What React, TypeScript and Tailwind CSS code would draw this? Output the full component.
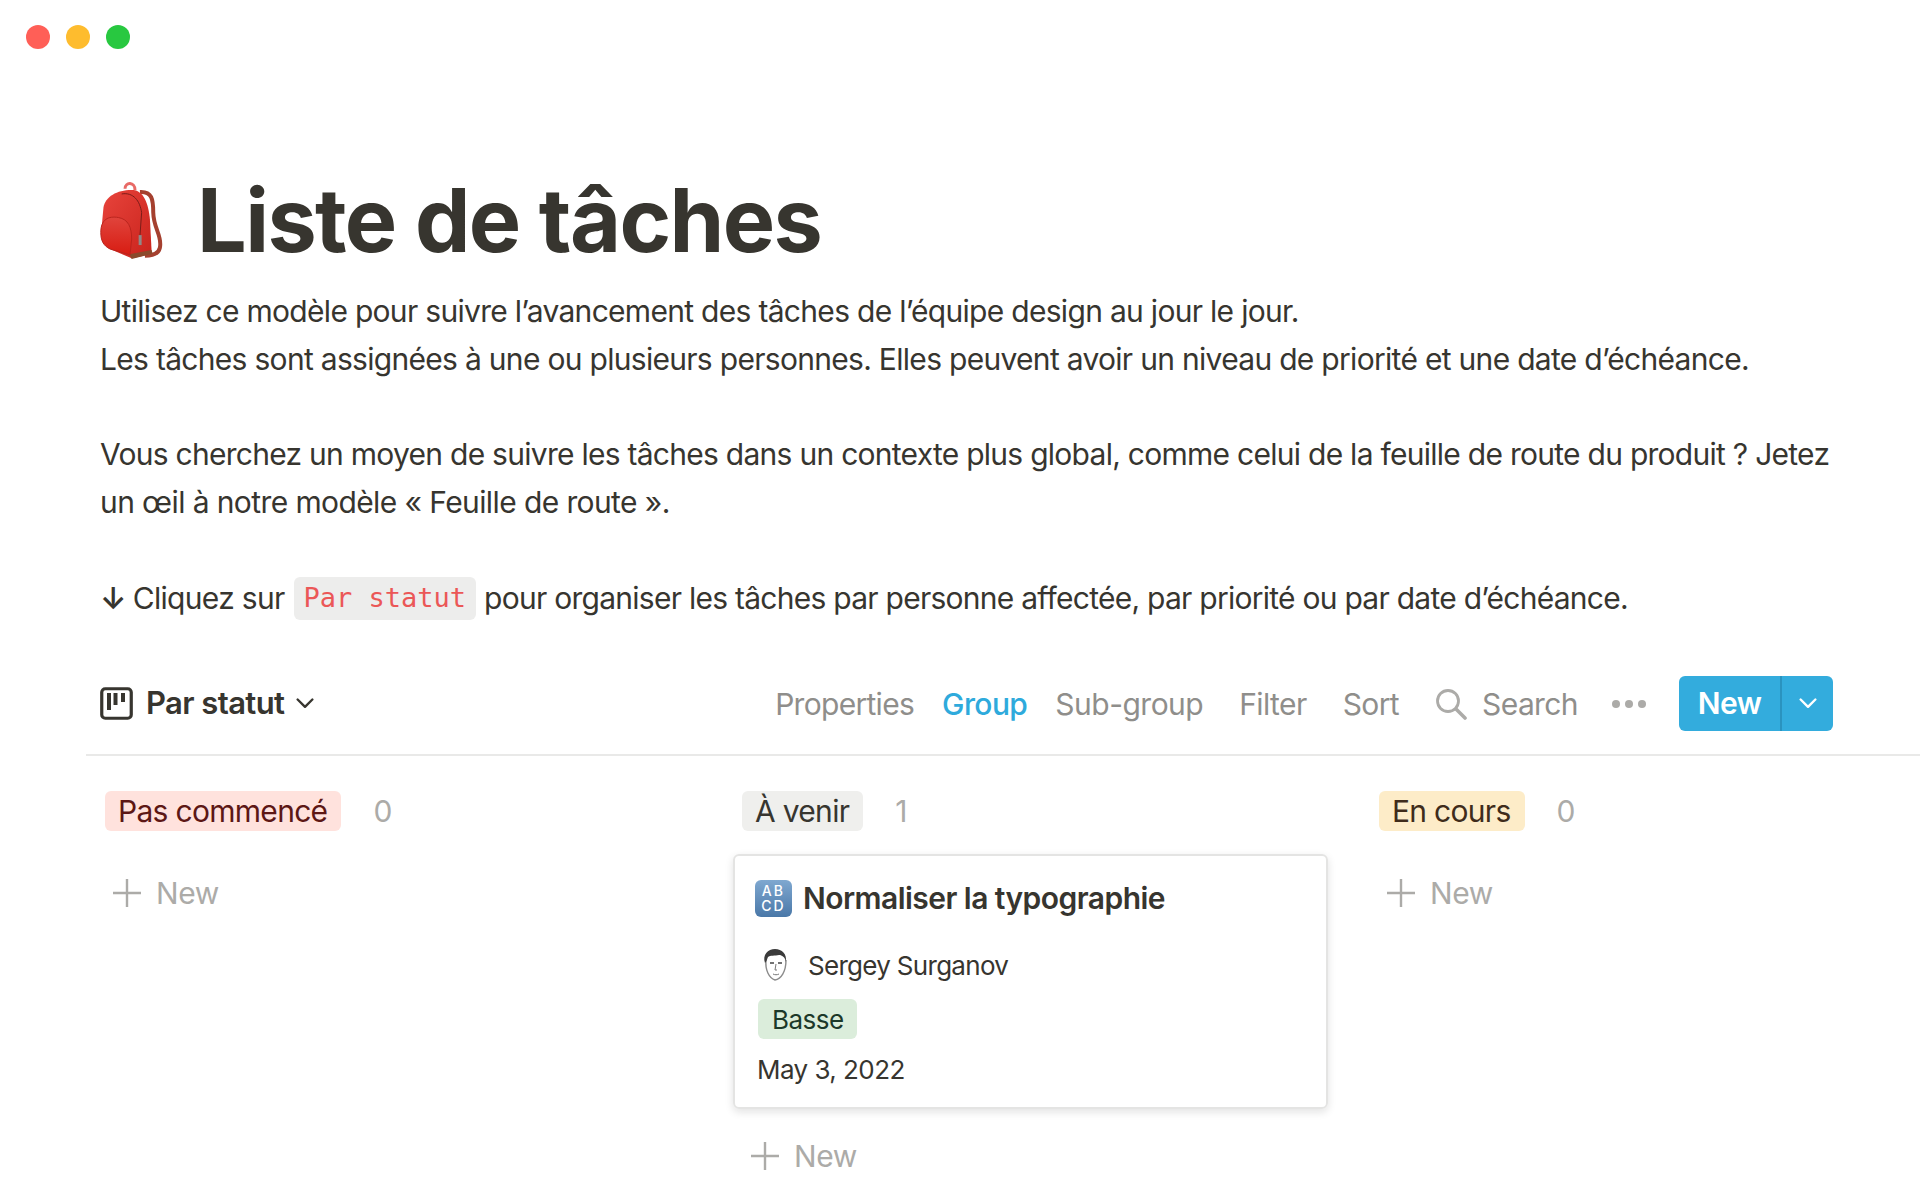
const sans = '[font-family:Inter,"Liberation_Sans",sans-serif]'

function Backpack() {
  return (
    <svg width="65" height="78" viewBox="30 35 195 235" className="shrink-0">
      <defs>
        <linearGradient id="bp" x1="0" y1="0" x2="1" y2="1">
          <stop offset="0" stopColor="#e8443c" />
          <stop offset="1" stopColor="#c9231c" />
        </linearGradient>
        <linearGradient id="bq" x1="0" y1="0" x2="0" y2="1">
          <stop offset="0" stopColor="#e0443c" />
          <stop offset="1" stopColor="#d81c12" />
        </linearGradient>
      </defs>
      <path d="M105 58C105 37 135 37 135 62" fill="none" stroke="#e86a66" strokeWidth="9" />
      <path d="M150 68C186 66 190 90 190 130C191 180 218 200 210 236C206 256 185 260 165 260" fill="none" stroke="#a5402f" strokeWidth="12" />
      <path d="M40 115C45 80 85 60 130 62C160 65 175 100 180 150L185 245C185 255 160 262 125 268L60 240C40 230 35 200 35 170Z" fill="url(#bp)" />
      <path d="M118 256L185 243L188 254L125 270Z" fill="#8a4a2c" />
      <path d="M95 74C130 68 150 95 155 130L150 200" fill="none" stroke="#7a1c18" strokeWidth="3" />
      <path d="M146 198h9v30h-9z" fill="#8f8a88" />
      <path d="M32 190C32 150 55 140 85 145C115 150 125 175 125 210L120 258L60 240C40 230 32 215 32 190Z" fill="url(#bq)" stroke="#b8241d" strokeWidth="3" />
    </svg>
  )
}

function BoardIcon() {
  return (
    <svg width="33" height="33" viewBox="0 0 33 33" className="shrink-0">
      <rect x="1.75" y="1.75" width="29.5" height="29.5" rx="3.5" fill="none" stroke="#37352f" strokeWidth="3.2" />
      <path d="M7 6h4v17H7zM13.5 6h4v12h-4zM21 6h4v9h-4z" fill="#37352f" />
    </svg>
  )
}

function Chevron({ color, w = 18 }: { color: string; w?: number }) {
  return (
    <svg width={w} height={w * 0.6} viewBox="0 0 18 11" fill="none" className="shrink-0">
      <path d="M1.5 1.5L9 9L16.5 1.5" stroke={color} strokeWidth="2.4" strokeLinecap="round" strokeLinejoin="round" />
    </svg>
  )
}

function AddRow({ className }: { className: string }) {
  return (
    <div className={`flex items-center gap-[15px] h-[40px] text-[30px] tracking-[-0.4px] text-[#acaba8] ${className}`}>
      <svg width="28" height="28" viewBox="0 0 28 28" className="shrink-0">
        <path d="M14 0v28M0 14h28" stroke="#acaba8" strokeWidth="2.4" />
      </svg>
      New
    </div>
  )
}

function Avatar() {
  return (
    <svg width="26" height="34" viewBox="0 0 26 34" fill="none" className="shrink-0">
      <path d="M4 12C3 22 7 30 13 32C19 31 24 24 24 12" fill="#fff" stroke="#8b8b8b" strokeWidth="1.4" />
      <path d="M3 15C0 7 6 1 13 1C20 1 25 6 24 14C23 9 20 7 17 7C13 8 8 7 6 9C5 11 5 13 3 15Z" fill="#3b3b3b" />
      <path d="M8 15h4M16 15h4" stroke="#444" strokeWidth="1.5" />
      <path d="M14 16L13 22H15M11 26C13 27 15 27 17 26" stroke="#777" strokeWidth="1" />
    </svg>
  )
}

function Column({ label, count, tone, children }: { label: string; count: number; tone: string; children: React.ReactNode }) {
  return (
    <div className="w-[593px] shrink-0 flex flex-col">
      <div className="flex items-center h-[40px] ml-[8px]">
        <span className={`h-[40px] pl-[13px] pr-[14px] rounded-[6px] flex items-center text-[30px] tracking-[-0.7px] whitespace-nowrap ${tone}`}>{label}</span>
        <span className="ml-[32px] text-[30px] text-[#acaba8]">{count}</span>
      </div>
      {children}
    </div>
  )
}

export default function App() {
  return (
    <div className={`w-[1920px] h-[1200px] overflow-hidden bg-white text-[#37352f] ${sans}`}>
      <div className="flex gap-4 pt-[25px] pl-[26px]">
        <span className="w-6 h-6 rounded-full bg-[#ff5f57]" />
        <span className="w-6 h-6 rounded-full bg-[#febc2e]" />
        <span className="w-6 h-6 rounded-full bg-[#28c840]" />
      </div>

      <div className="flex items-center gap-[32px] h-[100px] mt-[121px] ml-[100px]">
        <Backpack />
        <h1 className="text-[88px] leading-none font-bold tracking-[-1.6px] whitespace-nowrap">Liste de tâches</h1>
      </div>

      <div className="mt-[17px] ml-[100px] text-[30px] leading-[48px] whitespace-nowrap tracking-[-0.7px]">
        <p>Utilisez ce modèle pour suivre l’avancement des tâches de l’équipe design au jour le jour.</p>
        <p>Les tâches sont assignées à une ou plusieurs personnes. Elles peuvent avoir un niveau de priorité et une date d’échéance.</p>
        <p className="mt-[47px] tracking-[-0.73px]">Vous cherchez un moyen de suivre les tâches dans un contexte plus global, comme celui de la feuille de route du produit ? Jetez</p>
        <p className="tracking-[-0.6px]">un œil à notre modèle « Feuille de route ».</p>
        <p className="mt-[48px] flex items-center">
          <span className="font-semibold">↓</span>
          <span className="ml-[7px]">Cliquez sur</span>
          <code className="ml-[9px] mr-[8px] h-[43px] px-[10px] rounded-[6px] bg-[#ededec] text-[#eb5757] text-[27px] flex items-center tracking-normal font-['DejaVu_Sans_Mono',monospace]">Par statut</code>
          <span className="tracking-[-0.74px]">pour organiser les tâches par personne affectée, par priorité ou par date d’échéance.</span>
        </p>
      </div>

      <div className="ml-[86px] mt-[55px] h-[79px] pb-[24px] pl-[14px] pr-[87px] flex items-center border-b-2 border-[#e9e9e8] box-border">
        <div className="flex items-center">
          <BoardIcon />
          <span className="ml-[13px] text-[31px] font-semibold tracking-[-0.6px]">Par statut</span>
          <span className="ml-[12px]"><Chevron color="#37352f" /></span>
        </div>
        <div className="ml-auto flex items-center text-[30px] tracking-[-0.6px] text-[#8f8e8b]">
          <div className="flex items-center pt-[2px]">
            <span className="tracking-[-0.7px]">Properties</span>
            <span className="ml-[28px] text-[#2eaadc] font-medium">Group</span>
            <span className="ml-[28px] tracking-[-0.5px]">Sub-group</span>
            <span className="ml-[36px]">Filter</span>
            <span className="ml-[36px]">Sort</span>
          </div>
          <svg width="32" height="32" viewBox="0 0 32 32" fill="none" className="ml-[36px]">
            <circle cx="13" cy="13" r="10.5" stroke="#acaba8" strokeWidth="2.8" />
            <path d="M21 21L30 30" stroke="#acaba8" strokeWidth="3.6" strokeLinecap="round" />
          </svg>
          <span className="ml-[15px] pt-[2px]">Search</span>
          <span className="ml-[34px] flex gap-[5px]">
            <i className="w-[8px] h-[8px] rounded-full bg-[#acaba8]" />
            <i className="w-[8px] h-[8px] rounded-full bg-[#acaba8]" />
            <i className="w-[8px] h-[8px] rounded-full bg-[#acaba8]" />
          </span>
          <div className="ml-[33px] w-[154px] h-[55px] rounded-[6px] bg-[#33acdd] flex text-white">
            <span className="w-[101px] flex items-center justify-center font-semibold">New</span>
            <span className="flex-1 border-l-2 border-[#2a93bf] flex items-center justify-center"><Chevron color="#fff" /></span>
          </div>
        </div>
      </div>

      <div className="flex gap-[44px] ml-[97px] mt-[35px]">
        <Column label="Pas commencé" count={0} tone="bg-[#ffe2dd] text-[#5d1715]">
          <AddRow className="mt-[42px] ml-[16px]" />
        </Column>
        <Column label="À venir" count={1} tone="bg-[#efefed] text-[#37352f]">
          <div className="mt-[23px] -mx-[1px] h-[255px] rounded-[6px] border-2 border-[#e4e4e3] shadow-[0_3px_8px_rgba(15,15,15,0.12)] pl-[20px] pt-[23px] flex flex-col items-start">
            <div className="flex items-center h-[38px]">
              <div className="w-[37px] h-[37px] rounded-[6px] bg-gradient-to-b from-[#7fa8d0] to-[#4a78a8] flex flex-col items-center justify-center text-white text-[14px] leading-[15px] font-medium tracking-[0.15em]">
                <span>AB</span>
                <span>CD</span>
              </div>
              <span className="ml-[11px] text-[30px] font-semibold tracking-[-0.55px] whitespace-nowrap">Normaliser la typographie</span>
            </div>
            <div className="flex items-center mt-[31px] ml-[7px] h-[34px]">
              <Avatar />
              <span className="ml-[20px] text-[26px] tracking-[-0.7px] whitespace-nowrap">Sergey Surganov</span>
            </div>
            <span className="mt-[17px] ml-[3px] h-[40px] pl-[14px] pr-[13px] rounded-[6px] bg-[#dbeddb] text-[#1c3829] text-[26px] tracking-[-0.5px] flex items-center">Basse</span>
            <span className="mt-[15px] ml-[2px] text-[26px] leading-[32px] tracking-[-0.55px] whitespace-nowrap">May 3, 2022</span>
          </div>
          <AddRow className="mt-[27px] ml-[17px]" />
        </Column>
        <Column label="En cours" count={0} tone="bg-[#fdecc8] text-[#402c1b]">
          <AddRow className="mt-[42px] ml-[16px]" />
        </Column>
      </div>
    </div>
  )
}
